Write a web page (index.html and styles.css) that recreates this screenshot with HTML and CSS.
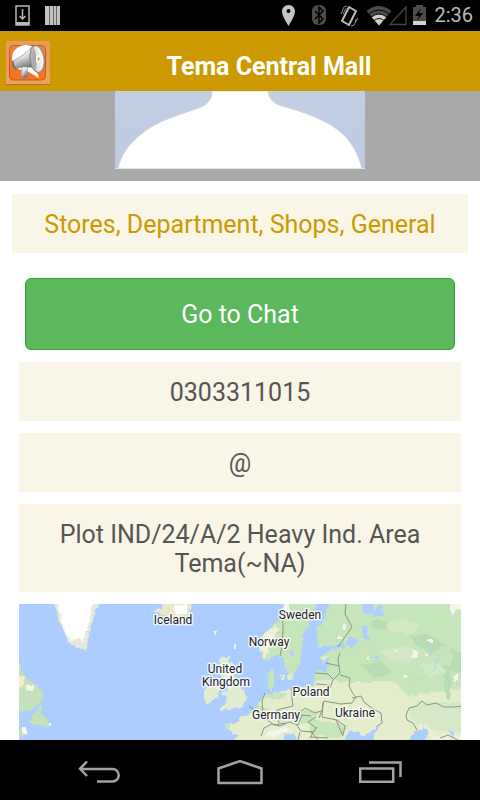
FILE: index.html
```html
<!DOCTYPE html>
<html lang="en">
<head>
<meta charset="utf-8">
<meta name="viewport" content="width=device-width, initial-scale=1">
<title>Tema Central Mall</title>
<link rel="stylesheet" href="styles.css">
</head>
<body>
<div class="status">
  <svg class="status-left" width="48" height="22" viewBox="14 5 48 22" aria-hidden="true">
    <path d="M16 6h13v19H16z" fill="none" stroke="#b8b8b8" stroke-width="1.5"/>
    <path d="M16 22h13v3H16z" fill="#b8b8b8"/>
    <path d="M22.500 9v10m-3-3 3 3 3-3" fill="none" stroke="#b8b8b8" stroke-width="1.500"/>
    <path d="M45 6h15v19H45z" fill="#c2c2c2"/>
    <path d="M49.500 6v19M53.500 6v19M56.500 6v19" stroke="#666"/>
  </svg>
  <svg class="status-right" width="148" height="24" viewBox="281 4 148 24" aria-hidden="true">
    <path fill="#c4c4c4" fill-rule="evenodd" d="M288.500 5c-4 0-6.500 3-6.500 6.500 0 4.500 6.500 14.500 6.500 14.500s6.500-10 6.500-14.500c0-3.500-2.500-6.500-6.500-6.500zm0 4a2 2 0 1 1 0 4 2 2 0 0 1 0-4z"/>
    <rect x="312" y="5" width="14" height="20" rx="6" fill="#4c4c4c"/>
    <path d="m315 11 8 8-4 4V7l4 4-8 8" fill="none" stroke="#000" stroke-width="1.500"/>
    <path d="m349 7 7 4-7 14-7-4z" fill="none" stroke="#bbb" stroke-width="2" stroke-linejoin="round"/>
    <path d="m341 14 3-7 3-1m-4 8 3-6M351 26l3-1 4-7m-3 5 1-4" fill="none" stroke="#888" stroke-width="1"/>
    <path d="M366.500 11q12-10 25 0l-12.500 14z" fill="#4b4b4b"/>
    <path d="M371.500 17q7.500-6 15 0l-7.500 8.500z" fill="#d0d0d0"/>
    <path d="M369 13.500q10-7 20 0M371.500 17q7.500-6 15 0M374 20.500q5-4 10 0" stroke="#000" stroke-width=".9" fill="none"/>
    <path d="M390 24.500 406 7v17.500z" fill="none" stroke="#444" stroke-width="1.300"/>
    <path d="M413 7h3V5h7v2h3v18h-13z" fill="#4c4c4c"/><path d="M413 21h13v4h-13z" fill="#d2d2d2"/>
    <path d="m421 8-6 8h4l-2 5 6-8h-4z" fill="#000"/>
  </svg>
  <time class="clock">2:36</time>
</div>
<header class="header">
  <svg class="logo" width="44" height="44" viewBox="0 0 44 44" role="img" aria-label="Megaphone">
    <defs>
      <linearGradient id="frame" x2="0" y2="1"><stop stop-color="#ec9a54"/><stop offset="1" stop-color="#efa15a"/></linearGradient>
      <linearGradient id="tile" x2="0" y2="1"><stop stop-color="#e98442"/><stop offset="1" stop-color="#fa701c"/></linearGradient>
      <linearGradient id="horn" x2=".4" y2="1"><stop stop-color="#fff"/><stop offset=".5" stop-color="#e8e8e8"/><stop offset="1" stop-color="#777"/></linearGradient>
      <linearGradient id="bell"><stop stop-color="#999"/><stop offset=".4" stop-color="#ddd"/><stop offset="1" stop-color="#fff"/></linearGradient>
    </defs>
    <path d="M0 0h44v43H0z" fill="url(#frame)"/><path d="M0 43h44v1H0z" fill="#b77324"/>
    <rect x="3.500" y="4.500" width="36" height="34.500" rx="4" fill="url(#tile)" stroke="#b9602a"/>
    <ellipse cx="20" cy="17" rx="14" ry="13" fill="#fff"/>
    <path d="M20 26h9l4 11-12-7z" fill="#fff"/>
    <path d="m15 25 7-1-1 7 1 4-2 2h-4l-1-3 1-5z" fill="url(#horn)" stroke="#888" stroke-width=".6"/>
    <path d="M7 20Q20 13 26 6l4 22q-9-4-18-1l-3 1q-3-3-2-8z" fill="url(#horn)" stroke="#888" stroke-width=".6"/>
    <path d="M7 20q-1 5 3 8" fill="none" stroke="#666" stroke-width="1.500"/>
    <ellipse cx="31" cy="18" rx="7" ry="13.500" transform="rotate(-8 31 18)" fill="url(#bell)" stroke="#8a8a8a"/>
    <path d="M27 6q5 7 3 24-5-8-3-24z" fill="#aaa"/>
    <ellipse cx="32" cy="18" rx="2" ry="4" fill="#fff"/>
    <ellipse cx="32.500" cy="18" rx="1.200" ry="2" fill="#efa246"/>
  </svg>
  <h1 class="title">Tema Central Mall</h1>
</header>
<main class="content">
  <div class="hero">
    <svg class="avatar" width="250" height="78" viewBox="0 0 250 78" role="img" aria-label="Profile picture">
      <defs><linearGradient id="sky" x2="0" y2="1"><stop stop-color="#c2cee3"/><stop offset="1" stop-color="#becae3"/></linearGradient></defs>
      <path d="M0 0h250v78H0z" fill="url(#sky)"/>
      <path d="M97 0C97 8 94 12 86 16 65 24 42 29 25 44 12 55 5 66 3 78h244c-3-13-8-23-18-34-17-16-41-23-65-30-7-3-10-7-11-14z" fill="#fff" stroke="#cfd5e0"/>
      <path d="M0 77.500h250" stroke="#e4e6ea"/>
    </svg>
  </div>
  <p class="category">Stores, Department, Shops, General</p>
  <button class="chat" type="button">Go to Chat</button>
  <div class="details">
    <p class="detail">0303311015</p>
    <p class="detail">@</p>
    <p class="detail">Plot IND/24/A/2 Heavy Ind. Area<br>Tema(~NA)</p>
    <svg class="map" viewBox="19 604 442 136" preserveAspectRatio="xMidYMin slice" role="img" aria-label="Map of Europe">
      <defs>
        <filter id="coast" x="0" y="0" width="100%" height="100%" color-interpolation-filters="sRGB"><feTurbulence type="fractalNoise" baseFrequency=".16" numOctaves="3" seed="4"/><feDisplacementMap in="SourceGraphic" scale="6" xChannelSelector="R" yChannelSelector="G"/></filter>
        <clipPath id="land">
          <path d="M285 598l-2 18-10 8-13 14v16l7 7 11-7 4 5 5 14 6 3 7-13 3-10-1-17 8-13 10-25zM330 598l-5 21-8 10v17l9 1 19-4 2 5-16 2-10 6v9l7 1-2 6-8-2-3 8-2 8-20 2-18 5-7-5-1-14 7-5v14l-2 8 5 2-14 3-3 7-7 9-13 5-2 6-15 1 5 6 9 5-1 20H480V598z"/>
        </clipPath>
      </defs>
      <path class="sea" d="M19 604h442v136H19z"/>
      <g filter="url(#coast)">
        <path fill="#e5ead7" d="M52 596l9 29 8 18 17 7 4-19 4-15 8-20z"/>
        <path fill="#fff" d="M56 596l8 33 7 12 8-3 5 5 4-17 7-30z"/>
        <path fill="#c3e2ba" d="M10 660l10 2 4 14 12 9 7 7-1 10-12 8H10zM41 702l-6 11-6 10 14 3 6-1-1-8-7-3zM10 733l14-4 2 3-7 8h-9z"/>
        <path fill="#f6ebcc" d="M10 676h14l-1 10-13 6z"/><path fill="#f5f8f2" d="M26 686h8v4h-7zM22 728h4v6h-5zM48 722h4v5h-4z"/>
        <path fill="#e9e7c9" d="M153 611l10-3-4-11h33l-1 16-6 6-17-2z"/><path fill="#fff" d="M174 605h13v9h-12z"/>
        <path fill="#e1edd0" d="M230 656l-9 2-3 7 3 9 7 10 1 4-7 6 6 5-9 11 13-1 12-4 4-8-8-11-3-8-6-8 3-6-5-3zM204 689l9-7 6 4-1 12-13 6-1-7z"/>
        <path fill="#eef2e6" d="M221 670l8-2 5 16-4 5zM214 631h2v5h-2zM234 644h2v5h-2z"/>
        <g clip-path="url(#land)">
          <path fill="#c6e5bb" d="M200 596h280v150H200z"/>
          <path fill="#e5eecc" d="M230 700l44-11 50-10 19 3 20 0 30-1 15 14 65-8v64H230z"/>
          <path fill="#c7e6b8" d="M345 655l16 2 8 25-21-3zM295 710l25 2-8 12-24-3zM310 719l38 6-8 14-30-5zM250 704l20 4-9 8-18-2zM265 692l22 1-6 6-17-1z"/>
          <path fill="#d6e9c6" d="M260 712l15-4 22 8-14 8-30-7zM407 712l12-11 33 3 15-6v35l-46-4z"/>
          <path fill="#b8dcb1" d="M410 636l18-2 17 11-12 8-15-7zM452 649l15 4v23l-16-7zM360 665l22-4 9 12-16 5zM374 620l17 2-4 8-17-1zM444 665l8 3-2 32-5-2z"/>
          <path fill="#d3e8c5" d="M386 623l20-5 14 9-9 8-22-4zM380 650l26-4 15 7-14 10-19-4zM420 666l18-4 8 9-17 7z"/>
          <path fill="#f2eedb" d="M261 638l14-14 5 4-10 17-4 13-5-7zM430 735l40-1v12h-39zM418 723l10 3 6 9-8 1z"/>
          <path fill="#f6f4ec" d="M449 596h20v18l-11-5-6 6zM284 598h6v16l-7 4zM264 735l22-9 6 4-20 8zM317 646h8v3h-8zM412 649h5v8h-5zM453 675h6v6h-6z"/>
          <path fill="#f6f4ec" d="M343 624h2v5h-2zM338 637h3v3h-3zM367 657h2v4h-2zM403 675h6v3h-6zM428 640h5v2h-5zM393 650h5v2h-5zM425 653h4v2h-4z"/>
          <path class="sea" d="M362 600h8l4 12 7-8 2 9-6 4-15-5zM363 624l4 1 2 15-3 1-4-10zM348 637l5-1 4 8-6 3-4-4zM373 656l5 2-1 4zM322 658l6-1 1 8-6 3zM290 648l4 6-2 3z"/>
          <path class="sea" d="M343 746l7-15 9 1 3 4 10-5 7-5-4 8-4 12zM405 746l9-15 11-4 4 6-8 13zM284 735l9-1 11 12h-19zM448 730l5 2-1 5z"/>
          <path fill="none" stroke="#a9cff8" d="M413 684l3-5 6-3M433 671l4-10 3-8M430 654l2-5M451 740l2-6M300 637l3-2"/>
        </g>
        <path fill="#dcebc9" d="M280 675h5v5l-3 1zM287 675l5-1 1 6-5-1zM322 656h4v4h-4z"/>
      </g>
      <g class="border">
        <path d="M283 616v15l-1 16-2 9M346 604l-1 10 7 13-14 20M340 653l-2 6 2 14-7 7-3 8M315 673l13 1 6 6M326 663l13 3M316 684l14 1M340 675l10 3-1 8 4 8 3 3-4 6-11 1-17-3-2 9-3 8M352 698l9-2 3 6 9 7 8 4 1 10-6 4M323 702l-1 15 15 3 8 6-2 9M316 717l-8 5 8 6-6 10M336 720l3 7 4 9M292 687v12l1 7-16 4 3 8 12 1 13-11 10 5 6-2M277 710l2 13M265 693l-3 8 1 12M249 706l13 10 12 9 12-2M264 728l8-4 8 2 9-4 9 3 4-10 9 1M264 728l-3 8M296 724l5 7 12 1 4-5M300 732l-2 8M311 732l8 9M310 737l18 1M417 730l-4-7-6-3-1-5 3-7 8-2 5-5 5 4 9-2 8 4 10 0 8-1 5-6-1-7 6-1M440 738l8-3 10 5"/>
      </g>
      <g class="place">
        <text x="173" y="624">Iceland</text><text x="300" y="619">Sweden</text><text x="269" y="646">Norway</text>
        <text x="225" y="673">United</text><text x="226" y="686">Kingdom</text><text x="311" y="696">Poland</text>
        <text x="276" y="719">Germany</text><text x="355" y="717">Ukraine</text>
      </g>
    </svg>
  </div>
</main>
<nav class="navbar" aria-label="System">
  <button type="button" aria-label="Back"><svg width="42" height="24" viewBox="79 760 42 24"><path d="M98 781.500h15.500a6.200 6.200 0 0 0 0-12.500H81M88 761.500l-7 7.300 7 7.200"/></svg></button>
  <button type="button" aria-label="Home"><svg width="46" height="26" viewBox="217 758 46 26"><path d="M218.500 782v-14.500l21.500-7.500 21.500 7.500V782z"/></svg></button>
  <button type="button" aria-label="Recent apps"><svg width="44" height="24" viewBox="360 760 44 24"><path d="M361.200 768.500h33v13.200h-33zM370 762.500h31.500V777"/></svg></button>
</nav>
</body>
</html>
```
FILE: styles.css
```css
* { box-sizing: border-box; }

body {
  margin: 0;
  height: 100vh;
  display: flex;
  flex-direction: column;
  background: #fff;
  color: #555;
  font: 25px/29px Roboto, "Liberation Sans", sans-serif;
}

h1, p { margin: 0; }

svg { display: block; flex: none; }

.status {
  display: flex;
  align-items: center;
  flex: none;
  height: 31px;
  padding: 0 7px 0 14px;
  background: #000;
}

.status-right { margin-left: auto; }

.clock {
  width: 40px;
  margin-left: 4px;
  color: #bbb;
  font-size: 20px;
  text-align: right;
}

.header {
  display: flex;
  align-items: center;
  flex: none;
  height: 60px;
  padding: 4px 4px 0 6px;
  background: #cc9900;
}

.title {
  flex: 1;
  padding: 6px 0 0 12px;
  color: #fff;
  font-size: 25px;
  line-height: 29px;
  text-align: center;
}

.content {
  flex: 1;
  min-height: 0;
  overflow: hidden;
}

.hero {
  display: flex;
  justify-content: center;
  height: 90px;
  background: #a9a9a9;
}

.category {
  margin: 13px 12px 25px;
  padding: 16px 15px 14px;
  background: #faf6e7;
  color: #cc9900;
  text-align: center;
}

.chat {
  display: block;
  width: calc(100% - 50px);
  height: 72px;
  margin: 0 auto;
  border: 1px solid #2fa82f;
  border-radius: 6px;
  background: #5cb85c;
  color: #fff;
  font: inherit;
}

.details {
  display: flex;
  flex-direction: column;
  gap: 12px;
  padding: 12px 19px 0;
}

.detail {
  padding: 16px 15px 14px;
  background: #faf6e7;
  text-align: center;
}

.map {
  width: 100%;
  aspect-ratio: 442 / 136;
}

.sea { fill: #accdff; }

.border path {
  fill: none;
  stroke: #8b9584;
  stroke-linejoin: round;
}

.place {
  fill: #222;
  stroke: #fff;
  stroke-opacity: 0.8;
  stroke-width: 3px;
  stroke-linejoin: round;
  paint-order: stroke;
  font-size: 12px;
  text-anchor: middle;
}

.navbar {
  display: flex;
  justify-content: center;
  gap: 44px;
  flex: none;
  height: 60px;
  background: #000;
}

.navbar button {
  display: flex;
  align-items: center;
  justify-content: center;
  width: 97px;
  padding: 4px 0 0;
  border: 0;
  background: none;
}

.navbar path {
  fill: none;
  stroke: #a3a3a3;
  stroke-width: 2.5px;
}
```
